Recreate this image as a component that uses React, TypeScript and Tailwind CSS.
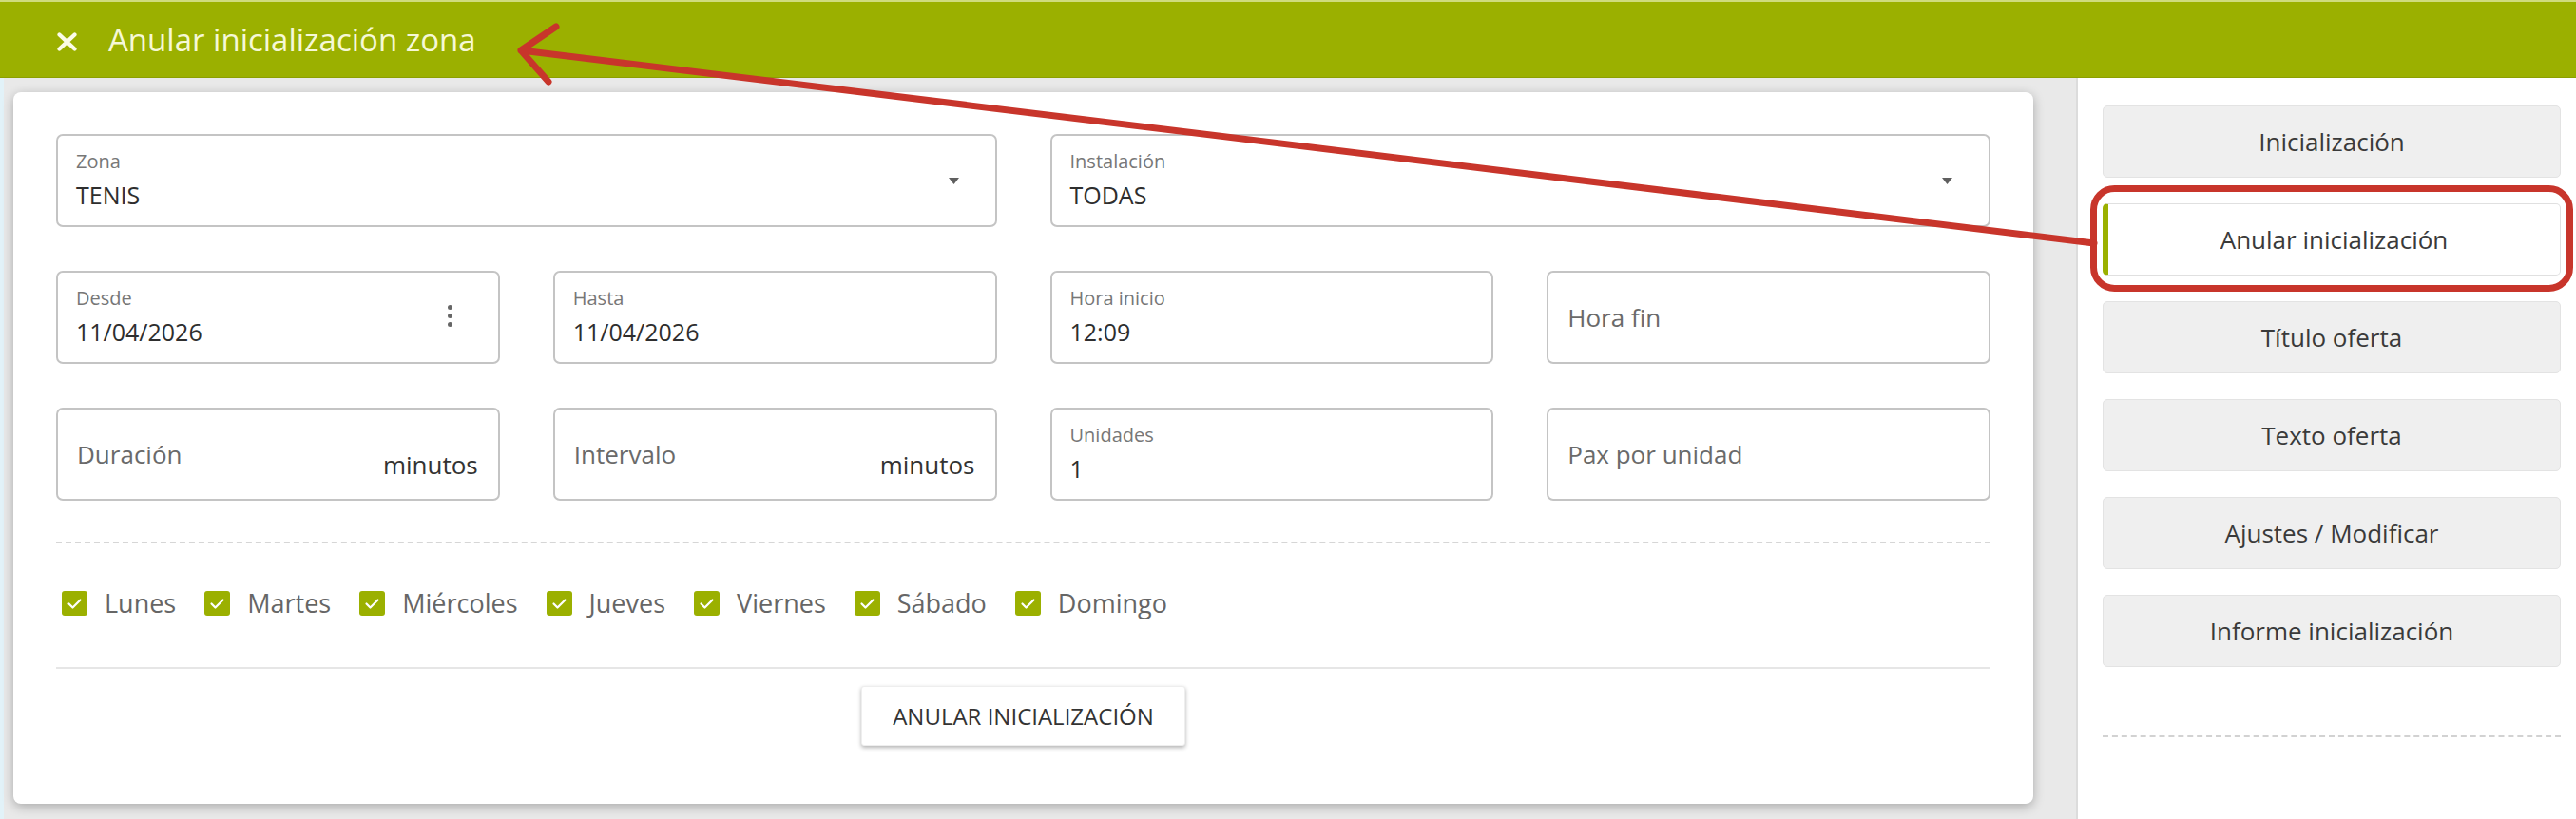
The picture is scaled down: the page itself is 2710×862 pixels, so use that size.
import React from "react";

const font = { fontFamily: '"Open Sans", "Liberation Sans", sans-serif' };

function Caret() {
  return (
    <svg width="11" height="7" viewBox="0 0 11 7" className="shrink-0">
      <path d="M0 0 H11 L5.5 7 Z" fill="#5f5f5f" />
    </svg>
  );
}

function Kebab() {
  return (
    <div className="flex flex-col items-center gap-[4px] shrink-0 -mt-[3px]">
      <span className="w-[5px] h-[5px] rounded-full bg-[#666]" />
      <span className="w-[5px] h-[5px] rounded-full bg-[#666]" />
      <span className="w-[5px] h-[5px] rounded-full bg-[#666]" />
    </div>
  );
}

function Labeled({
  label,
  value,
  right,
  wide,
}: {
  label: string;
  value: string;
  right?: React.ReactNode;
  wide?: boolean;
}) {
  return (
    <div
      className={
        wide
          ? "col-span-2 h-[98px] border-2 border-[#c4c4c4] rounded-[7px] bg-white flex items-center pl-[19px] pr-[38px]"
          : "h-[98px] border-2 border-[#c4c4c4] rounded-[7px] bg-white flex items-center pl-[19px] pr-[48px]"
      }
    >
      <div className="flex-1 self-stretch pt-[15px]">
        <div className="text-[20px] leading-[24px] text-[#777]">{label}</div>
        <div className="mt-[8px] text-[25px] leading-[30px] text-[#2e2e2e]">{value}</div>
      </div>
      {right}
    </div>
  );
}

function Placeholder({ text, unit }: { text: string; unit?: string }) {
  return (
    <div className="h-[98px] border-2 border-[#c4c4c4] rounded-[7px] bg-white flex pl-[20px] pr-[21px]">
      <div className="flex-1 flex items-center text-[26px] leading-[32px] text-[#6a6a6a]">{text}</div>
      {unit && (
        <div className="flex items-end pb-[20px] text-[26px] leading-[32px] text-[#333]">{unit}</div>
      )}
    </div>
  );
}

function Day({ name }: { name: string }) {
  return (
    <div className="flex items-center gap-[18px]">
      <span className="w-[27px] h-[26px] rounded-[3px] bg-[#9bb000] flex items-center justify-center">
        <svg width="17" height="13" viewBox="0 0 17 13">
          <path
            d="M2.5 6.5 L6.5 10.5 L14.5 2.5"
            stroke="white"
            strokeWidth="2.2"
            fill="none"
            strokeLinecap="round"
            strokeLinejoin="round"
          />
        </svg>
      </span>
      <span className="text-[27px] leading-[32px] text-[#666]">{name}</span>
    </div>
  );
}

function SideButton({ text, active }: { text: string; active?: boolean }) {
  return (
    <div
      className={
        active
          ? "h-[76px] rounded-[5px] bg-white border border-[#e0e0e0] border-l-[6px] border-l-[#9bb000] flex items-center justify-center text-[26px] text-[#3a3a3a]"
          : "h-[76px] rounded-[5px] bg-[#efefef] border border-[#e3e3e3] flex items-center justify-center text-[26px] text-[#3a3a3a]"
      }
    >
      {text}
    </div>
  );
}

export default function App() {
  const days = ["Lunes", "Martes", "Miércoles", "Jueves", "Viernes", "Sábado", "Domingo"];
  const side = [
    "Inicialización",
    "Anular inicialización",
    "Título oferta",
    "Texto oferta",
    "Ajustes / Modificar",
    "Informe inicialización",
  ];

  return (
    <div className="relative w-[2710px] h-[862px] overflow-hidden bg-[#e9e9e9]" style={font}>
      {/* title bar */}
      <header className="h-[82px] bg-[#9bb000] border-t-2 border-t-[#cfdb7e] border-b border-b-[#8c9f00] flex items-center pl-[59px] gap-[32px]">
        <svg width="23" height="20" viewBox="0 0 23 20" className="shrink-0 mt-[4px]">
          <path d="M3.5 2.5 L19.5 17.5 M19.5 2.5 L3.5 17.5" stroke="#fbfce8" strokeWidth="4.2" strokeLinecap="round" />
        </svg>
        <h1 className="text-[33px] leading-[40px] text-[#f6f8d6] font-normal">Anular inicialización zona</h1>
      </header>

      <div className="flex h-[780px]">
        {/* main form area */}
        <main className="flex-1 border-l-[4px] border-l-[#e2f2f8] pl-[10px] pr-[45px] pt-[15px]">
          <section className="bg-white rounded-[8px] shadow-[0_3px_12px_rgba(0,0,0,0.28)] px-[45px] pt-[44px] pb-[61px]">
            <div className="grid grid-cols-4 gap-x-[56px] gap-y-[46px]">
              <Labeled wide label="Zona" value="TENIS" right={<Caret />} />
              <Labeled wide label="Instalación" value="TODAS" right={<Caret />} />
              <Labeled label="Desde" value="11/04/2026" right={<Kebab />} />
              <Labeled label="Hasta" value="11/04/2026" />
              <Labeled label="Hora inicio" value="12:09" />
              <Placeholder text="Hora fin" />
              <Placeholder text="Duración" unit="minutos" />
              <Placeholder text="Intervalo" unit="minutos" />
              <Labeled label="Unidades" value="1" />
              <Placeholder text="Pax por unidad" />
            </div>

            <div className="mt-[43px] border-t-2 border-dashed border-[#d6d6d6]" />

            <div className="mt-[47px] flex items-center gap-[30px] pl-[6px]">
              {days.map((d) => (
                <Day key={d} name={d} />
              ))}
            </div>

            <div className="mt-[51px] border-t-2 border-[#e6e6e6]" />

            <div className="mt-[18px] flex justify-center">
              <button className="h-[63px] w-[341px] bg-white rounded-[3px] border border-[#eeeeee] shadow-[0_2px_4px_rgba(0,0,0,0.3)] text-[24px] text-[#333] uppercase">
                Anular inicialización
              </button>
            </div>
          </section>
        </main>

        {/* side menu */}
        <aside className="w-[526px] bg-white border-l-2 border-l-[#dcdcdc] pl-[26px] pr-[16px] pt-[29px]">
          <div className="flex flex-col gap-[27px]">
            {side.map((s, i) => (
              <SideButton key={s} text={s} active={i === 1} />
            ))}
          </div>
          <div className="mt-[72px] border-t-2 border-dashed border-[#d2d2d2]" />
        </aside>
      </div>

      {/* red callout drawn over the page */}
      <svg
        className="absolute inset-0 pointer-events-none"
        width="2710"
        height="862"
        viewBox="0 0 2710 862"
      >
        <rect x="2202.5" y="198.5" width="501" height="105" rx="22" fill="none" stroke="#c8352b" strokeWidth="7" />
        <path
          d="M2203 256 L548 53 M585 28 L548 53 L577 86"
          fill="none"
          stroke="#c8352b"
          strokeWidth="7"
          strokeLinecap="round"
          strokeLinejoin="round"
        />
      </svg>
    </div>
  );
}
